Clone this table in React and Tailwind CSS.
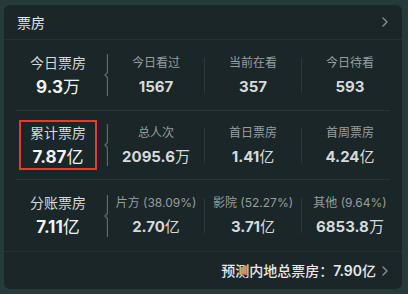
import React from "react";

const FONT = "font-['Inter','Noto_Sans_CJK_SC',sans-serif]";

const rows = [
  {
    title: "今日票房",
    value: "9.3",
    unit: "万",
    stats: [
      { label: "今日看过", value: "1567", unit: "" },
      { label: "当前在看", value: "357", unit: "" },
      { label: "今日待看", value: "593", unit: "" },
    ],
  },
  {
    title: "累计票房",
    value: "7.87",
    unit: "亿",
    highlight: true,
    stats: [
      { label: "总人次", value: "2095.6", unit: "万" },
      { label: "首日票房", value: "1.41", unit: "亿" },
      { label: "首周票房", value: "4.24", unit: "亿" },
    ],
  },
  {
    title: "分账票房",
    value: "7.11",
    unit: "亿",
    stats: [
      { label: "片方 (38.09%)", value: "2.70", unit: "亿" },
      { label: "影院 (52.27%)", value: "3.71", unit: "亿" },
      { label: "其他 (9.64%)", value: "6853.8", unit: "万" },
    ],
  },
];

const Chevron = ({ className }) => (
  <svg className={className} width="6" height="10" viewBox="0 0 6 10" fill="none">
    <polyline points="1,1 5,5 1,9" stroke="#8a9394" strokeWidth="1.3" strokeLinecap="round" strokeLinejoin="round" />
  </svg>
);

// vertical line with a small notch, like a flat brace
const Brace = () => (
  <svg width="8" height="42" viewBox="0 0 8 42" fill="none" className="shrink-0">
    <path d="M7.5 0 V18.5 L5 21 L7.5 23.5 V42" stroke="#5d6869" strokeWidth="1.4" />
  </svg>
);

const Row = ({ row, border, height }) => (
  <div className={`mx-[12px] flex items-center ${height} ${border ? "border-b border-[#2a3738]" : ""}`}>
    <div className="w-[84px] shrink-0 flex justify-center">
      <div
        className={`flex flex-col items-center justify-center ${
          row.highlight ? "w-[78px] h-[50px] border-2 border-[#e53a3a]" : ""
        }`}
      >
        <span className="text-[14px] leading-[18px] text-[#d5d9d9]">{row.title}</span>
        <span className="mt-[5px] text-[17px] leading-[20px] font-bold text-[#f2f4f4]">
          {row.value}
          <span className="font-normal">{row.unit}</span>
        </span>
      </div>
    </div>
    <Brace />
    {row.stats.map((s, i) => (
      <React.Fragment key={s.label}>
        {i > 0 && <div className="w-px h-[35px] bg-[#2c393a] shrink-0" />}
        <div className="w-[96px] shrink-0 flex flex-col items-center">
          <span className="text-[12px] leading-[16px] text-[#979f9f] whitespace-nowrap">{s.label}</span>
          <span className="mt-[7px] text-[15px] leading-[18px] font-bold text-[#d6dada] whitespace-nowrap">
            {s.value}
            {s.unit && <span className="font-normal">{s.unit}</span>}
          </span>
        </div>
      </React.Fragment>
    ))}
  </div>
);

export default function App() {
  return (
    <div className={`w-[408px] h-[294px] bg-[#26393b] pl-[4px] pt-[5px] ${FONT}`}>
      <div className="w-[398px] h-[284px] rounded-[6px] bg-[#1a2628] flex flex-col overflow-hidden">
        {/* header */}
        <div className="h-[35px] shrink-0 flex items-center justify-between pl-[13px] pr-[14px] border-b border-[#243233]">
          <span className="text-[14px] text-[#e4e7e7]">票房</span>
          <Chevron />
        </div>

        <Row row={rows[0]} border height="h-[71px]" />
        <Row row={rows[1]} border height="h-[69px]" />
        <Row row={rows[2]} height="h-[71px]" />

        {/* footer */}
        <div className="flex-1 flex items-center justify-end gap-[6px] pr-[14px] border-t border-[#243233]">
          <span className="text-[14px] font-medium text-[#e6e9e9]">
            预测内地总票房：<span className="font-semibold">7.90</span>亿
          </span>
          <Chevron />
        </div>
      </div>
    </div>
  );
}
